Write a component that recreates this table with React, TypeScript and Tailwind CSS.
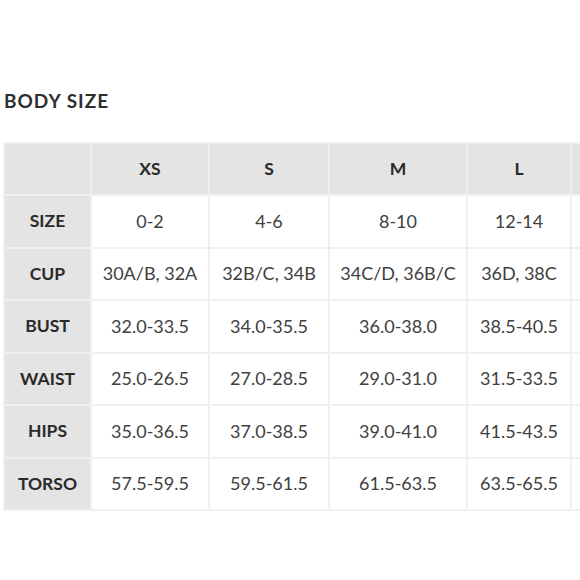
const sizes = ["XS", "S", "M", "L"];

const rows: { label: string; values: string[] }[] = [
  { label: "SIZE", values: ["0-2", "4-6", "8-10", "12-14"] },
  { label: "CUP", values: ["30A/B, 32A", "32B/C, 34B", "34C/D, 36B/C", "36D, 38C"] },
  { label: "BUST", values: ["32.0-33.5", "34.0-35.5", "36.0-38.0", "38.5-40.5"] },
  { label: "WAIST", values: ["25.0-26.5", "27.0-28.5", "29.0-31.0", "31.5-33.5"] },
  { label: "HIPS", values: ["35.0-36.5", "37.0-38.5", "39.0-41.0", "41.5-43.5"] },
  { label: "TORSO", values: ["57.5-59.5", "59.5-61.5", "61.5-63.5", "63.5-65.5"] },
];

const colWidths = ["w-[87px]", "w-[118px]", "w-[120px]", "w-[138px]", "w-[104px]", "w-[80px]"];

export default function App() {
  return (
    <div className="h-[580px] w-[580px] overflow-hidden bg-white font-['Lato','Liberation_Sans',sans-serif]">
      <h1 className="pl-[4px] pt-[89px] text-[19px] font-bold leading-[24px] tracking-[1px] text-[#2f2f2f]">
        BODY SIZE
      </h1>

      <table className="ml-[3px] mt-[29px] w-[647px] table-fixed border-collapse">
        <colgroup>
          {colWidths.map((w, i) => (
            <col key={i} className={w} />
          ))}
        </colgroup>
        <thead>
          <tr className="h-[52px]">
            <th className="border-2 border-[#f0f0f0] bg-[#e4e4e4]" />
            {sizes.map((s) => (
              <th
                key={s}
                className="border-2 border-[#f0f0f0] bg-[#e4e4e4] text-center text-[17.5px] font-bold text-[#2a2a2a]"
              >
                {s}
              </th>
            ))}
            {/* next size column, cut off by the frame */}
            <th className="border-2 border-[#f0f0f0] bg-[#e4e4e4]" />
          </tr>
        </thead>
        <tbody>
          {rows.map((r) => (
            <tr key={r.label} className="h-[52.5px]">
              <th className="border-2 border-[#f0f0f0] bg-[#e4e4e4] text-center text-[17.5px] font-bold text-[#2a2a2a]">
                {r.label}
              </th>
              {r.values.map((v, i) => (
                <td
                  key={i}
                  className="whitespace-nowrap border-2 border-[#f0f0f0] text-center text-[18px] text-[#404040]"
                >
                  {v}
                </td>
              ))}
              <td className="border-2 border-[#f0f0f0]" />
            </tr>
          ))}
        </tbody>
      </table>
    </div>
  );
}
